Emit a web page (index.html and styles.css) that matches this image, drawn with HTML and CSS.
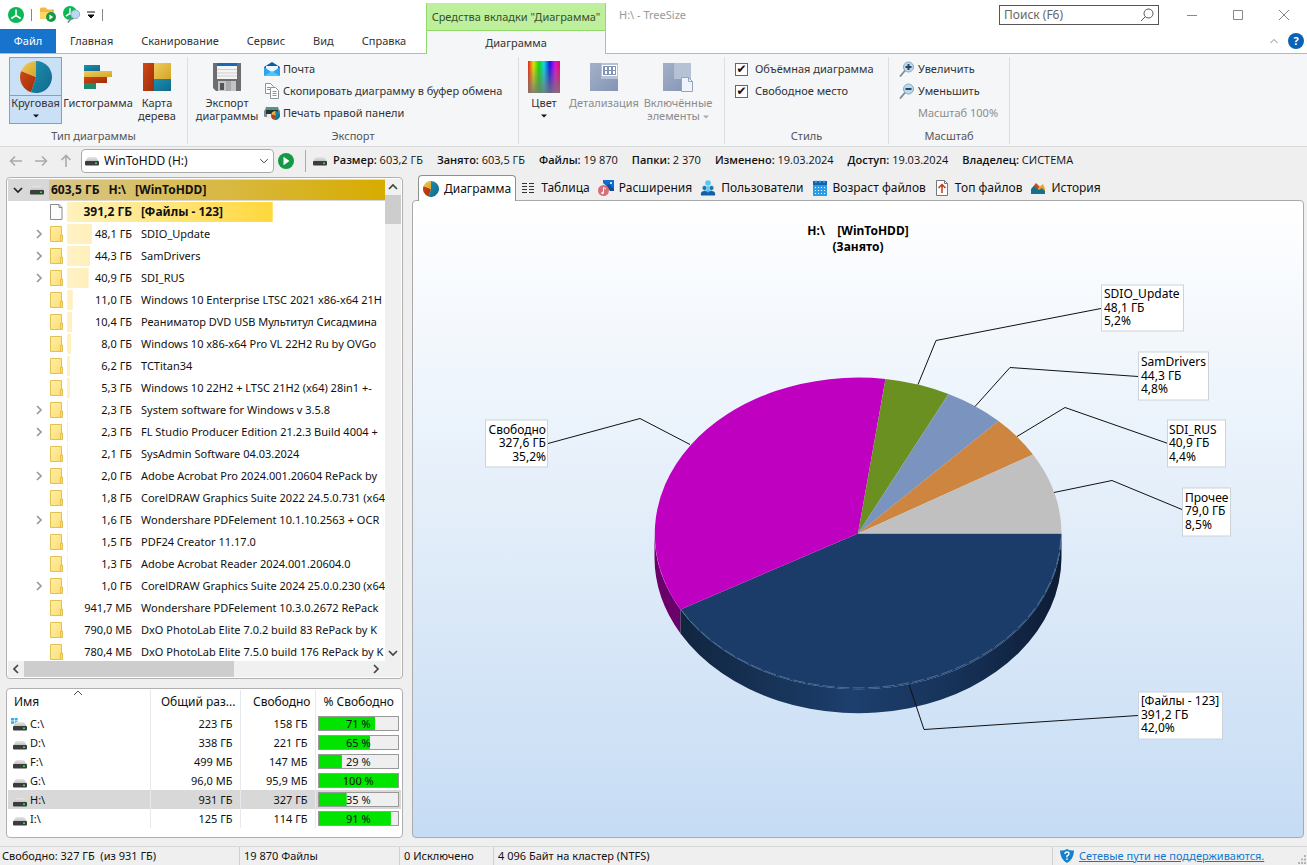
FILE: index.html
```html
<!DOCTYPE html>
<html lang="ru">
<head>
<meta charset="utf-8">
<title>H:\ - TreeSize</title>
<link rel="stylesheet" href="styles.css">
</head>
<body>
<svg class="defs" aria-hidden="true">
  <defs>
    <linearGradient id="gTeal" x1="0" y1="0" x2="1" y2="1"><stop offset="0" stop-color="#1b90b0"/><stop offset="1" stop-color="#12688c"/></linearGradient>
    <linearGradient id="gRed" x1="0" y1="0" x2="1" y2="1"><stop offset="0" stop-color="#cf4a12"/><stop offset="1" stop-color="#9e2c0c"/></linearGradient>
    <linearGradient id="gGold" x1="0" y1="0" x2="1" y2="1"><stop offset="0" stop-color="#f2cb5c"/><stop offset="1" stop-color="#d3a52a"/></linearGradient>
    <linearGradient id="gDisk" x1="0" y1="0" x2="0" y2="1"><stop offset="0" stop-color="#e8e8e8"/><stop offset="1" stop-color="#bcbcbc"/></linearGradient>
    <linearGradient id="gFolder" x1="0" y1="0" x2="1" y2="1"><stop offset="0" stop-color="#fff0a4"/><stop offset="1" stop-color="#fbdc74"/></linearGradient>
    <linearGradient id="gSteel" x1="0" y1="0" x2="1" y2="1"><stop offset="0" stop-color="#a3b0c8"/><stop offset="1" stop-color="#8494b4"/></linearGradient>
    <linearGradient id="gSpectrum"><stop offset="0" stop-color="#e8201c"/><stop offset=".17" stop-color="#e6e000"/><stop offset=".34" stop-color="#10d810"/><stop offset=".5" stop-color="#10d8e0"/><stop offset=".68" stop-color="#1818e8"/><stop offset=".85" stop-color="#e010d8"/><stop offset="1" stop-color="#e81050"/></linearGradient>
    <linearGradient id="gFade" x1="0" y1="0" x2="0" y2="1"><stop offset=".1" stop-color="#777" stop-opacity="0"/><stop offset="1" stop-color="#777" stop-opacity=".85"/></linearGradient>
    <symbol id="pie" viewBox="0 0 32 32"><path d="M16 16V0a16 16 0 1 1-5 31.200z" fill="url(#gTeal)"/><path d="M16 16L11 31.200A16 16 0 0 1 1.200 10z" fill="url(#gRed)"/><path d="M16 16L1.200 10A16 16 0 0 1 16 0z" fill="url(#gGold)"/></symbol>
    <symbol id="drive" viewBox="0 0 14 9"><path d="M3 0h8l3 4.500H0z" fill="url(#gDisk)"/><rect y="4" width="14" height="4.500" rx="1" fill="#3a3c3e"/><rect x="10" y="5.500" width="2" height="1.500" fill="#35e04c"/></symbol>
    <symbol id="folder" viewBox="0 0 13 16"><path d="M.5.5h11v8.500h1v6.500H.5z" fill="url(#gFolder)" stroke="#e4bf52"/><path d="M10.500 15.500V9.500h1.500" fill="none" stroke="#e4bf52"/></symbol>
    <symbol id="page" viewBox="0 0 13 16"><path d="M.5.5h8.500l3 3v12H.5z" fill="#fdfdfd" stroke="#8b8b8b"/><path d="M9 .5v3h3" fill="none" stroke="#8b8b8b"/></symbol>
    <symbol id="right" viewBox="0 0 16 16"><path d="M6 4l4 4-4 4" fill="none" stroke="currentColor" stroke-width="1.700"/></symbol>
    <symbol id="down" viewBox="0 0 16 16"><path d="M4 6l4 4 4-4" fill="none" stroke="currentColor" stroke-width="1.700"/></symbol>
    <symbol id="caret" viewBox="0 0 6 4"><path d="M0 .5h6L3 3.500z" fill="currentColor"/></symbol>
    <symbol id="play" viewBox="0 0 16 16"><circle cx="8" cy="8" r="8" fill="#149a44"/><path d="M5.500 3.800l6 4.200-6 4.200z" fill="#fff"/></symbol>
    <symbol id="logo" viewBox="0 0 16 16"><circle cx="8" cy="8" r="8" fill="#0cb755"/><path d="M8 2.500V8.500M8 8.500L3.300 11.500M8 8.500l4.700 3" stroke="#fff" stroke-width="1.600" fill="none"/></symbol>
    <symbol id="lens" viewBox="0 0 16 16"><path d="M1 15.500L6.500 9" stroke="#7e8a92" stroke-width="1.800"/><circle cx="9.500" cy="6" r="5" fill="#b9daf2" stroke="#8fa6b4"/></symbol>
  </defs>
</svg>

<header class="top">
  <div class="top-left">
    <div class="quick">
      <svg width="16" height="16"><use href="#logo"/></svg>
      <i class="bar"></i>
      <button aria-label="Открыть папку"><svg width="18" height="17" viewBox="0 0 18 17"><path d="M1 3q0-1.500 1.500-1.500h4l2 2h6.500v9.500H1z" fill="#f3b93c"/><path d="M1 6h14v7H1z" fill="#ffd765"/><use href="#play" x="7" y="6" width="10" height="10"/></svg></button>
      <button aria-label="Поиск файлов"><svg width="18" height="17" viewBox="0 0 18 17"><use href="#logo" x="0" y="0" width="14" height="14"/><use href="#lens" x="4" y="3" width="14" height="14"/></svg></button>
      <button aria-label="Настройка панели"><svg width="8" height="8" viewBox="0 0 8 8"><path d="M0 1h8M1 4h6L4 7z" fill="#111" stroke="#111"/></svg></button>
      <i class="bar"></i>
    </div>
    <nav class="tabs">
      <button class="file">Файл</button>
      <button>Главная</button>
      <button>Сканирование</button>
      <button>Сервис</button>
      <button>Вид</button>
      <button>Справка</button>
    </nav>
  </div>
  <div class="context">
    <div class="context-title">Средства вкладки "Диаграмма"</div>
    <button class="context-tab">Диаграмма</button>
  </div>
  <div class="top-right">
    <div class="title">H:\ - TreeSize</div>
    <div class="window-tools">
      <div class="window-row">
        <label class="search"><input type="text" placeholder="Поиск (F6)" aria-label="Поиск"><svg width="14" height="14" viewBox="0 0 14 14" fill="none" stroke="#555"><circle cx="8.500" cy="5.500" r="4.500"/><path d="M5.300 8.700L1 13"/></svg></label>
        <button aria-label="Свернуть"><svg width="12" height="12" viewBox="0 0 12 12"><path d="M1 6.500h10" stroke="#888"/></svg></button>
        <button aria-label="Развернуть"><svg width="12" height="12" viewBox="0 0 12 12"><path d="M1.500 1.500h9v9h-9z" fill="none" stroke="#888"/></svg></button>
        <button aria-label="Закрыть"><svg width="12" height="12" viewBox="0 0 12 12"><path d="M1 1l10 10M11 1L1 11" stroke="#888"/></svg></button>
      </div>
      <div class="help-row">
        <button aria-label="Свернуть ленту"><svg width="10" height="8" viewBox="0 0 10 8"><path d="M1.500 6L5 2.500 8.500 6" fill="none" stroke="#888"/></svg></button>
        <button class="help" aria-label="Помощь">?</button>
      </div>
    </div>
  </div>
</header>

<section class="ribbon">
  <div class="group g-type">
    <div class="tools">
      <button class="big active w-pie"><span class="pic"><svg width="32" height="32"><use href="#pie"/></svg></span><span>Круговая</span><svg class="caret" width="6" height="4"><use href="#caret"/></svg></button>
      <button class="big w-hist"><span class="pic"><svg width="28" height="28" viewBox="0 0 28 28"><rect y="2" width="16" height="6" fill="url(#gTeal)"/><rect y="8" width="28" height="6" fill="url(#gGold)"/><rect y="14" width="23" height="6" fill="url(#gRed)"/><rect y="20" width="12" height="6" fill="#208a68"/></svg></span><span>Гистограмма</span></button>
      <button class="big w-map"><span class="pic"><svg width="28" height="28" viewBox="0 0 28 28"><rect width="11" height="28" fill="url(#gRed)"/><rect x="11" width="17" height="16" fill="url(#gGold)"/><rect x="11" y="16" width="17" height="12" fill="url(#gTeal)"/></svg></span><span>Карта<br>дерева</span></button>
    </div>
    <div class="caption">Тип диаграммы</div>
  </div>
  <div class="group g-export">
    <div class="tools">
      <button class="big w-save"><span class="pic"><svg width="28" height="28" viewBox="0 0 28 28"><path d="M0 0h28v28H3l-3-3z" fill="#6c6e72"/><rect x="4" width="20" height="16" fill="#f4f4f4"/><rect x="4" width="20" height="3" fill="#1668b8"/><path d="M4 6.500h20M4 10h20M4 13h20" stroke="#cfcfcf"/><rect x="5" y="18" width="18" height="10" fill="#c4c4c4"/><rect x="7" y="20" width="4" height="7" fill="#555"/><rect x="13" y="18" width="5" height="10" fill="#aaa"/></svg></span><span>Экспорт<br>диаграммы</span></button>
      <div class="stack">
        <button class="line"><svg width="16" height="16" viewBox="0 0 16 16"><path d="M0 6l8-5 8 5v9H0z" fill="#0a5da4"/><path d="M2 5h12v7H2z" fill="#e9f6ff"/><path d="M0 6l8 5.500L16 6v9H0z" fill="#2aa4ee"/><path d="M0 15l8-5 8 5z" fill="#51c4fa"/></svg>Почта</button>
        <button class="line"><svg width="16" height="16" viewBox="0 0 16 16" fill="#fff" stroke="#8d959c"><path d="M1.500.5h5l3 3v7h-8z"/><path d="M3 4.500h3M3 6.500h4"/><path d="M6.500 4.500h5l3 3v8h-8z"/><path d="M8.500 8.500h4M8.500 10.500h4M8.500 12.500h4"/></svg>Скопировать диаграмму в буфер обмена</button>
        <button class="line"><svg width="16" height="16" viewBox="0 0 16 16"><path d="M2 2h12l1 3H1z" fill="#479a83"/><rect y="5" width="16" height="7" rx="1" fill="#7e898e"/><rect x="2" y="5" width="12" height="4" fill="#293238"/><rect x="3" y="9" width="8" height="5" fill="#eee"/><use href="#pie" x="7" y="6" width="9" height="9"/></svg>Печать правой панели</button>
      </div>
    </div>
    <div class="caption">Экспорт</div>
  </div>
  <div class="group g-color">
    <div class="tools">
      <button class="big w-color"><span class="pic"><svg width="32" height="32" viewBox="0 0 32 32"><rect width="32" height="32" fill="url(#gSpectrum)"/><rect width="32" height="32" fill="url(#gFade)"/></svg></span><span>Цвет</span><svg class="caret" width="6" height="4"><use href="#caret"/></svg></button>
      <button class="big w-detail" disabled><span class="pic"><svg width="28" height="28" viewBox="0 0 28 28"><rect width="28" height="28" fill="url(#gSteel)"/><rect x="11" width="17" height="16" fill="#b5c2d6"/><rect x="12.500" y="2.500" width="14" height="10" fill="#8294b4" stroke="#fff"/><path d="M15 4h2v3h-2zm4 0h2v3h-2zm4 0h2v3h-2zm-8 4h2v3h-2zm4 0h2v3h-2zm4 0h2v3h-2z" fill="#fff"/></svg></span><span>Детализация</span></button>
      <button class="big w-incl" disabled><span class="pic"><svg width="30" height="30" viewBox="0 0 30 30"><rect y="1" width="28" height="28" fill="url(#gSteel)"/><rect x="11" y="1" width="17" height="16" fill="#b5c2d6"/><path d="M18.500 15.500h7l4 4v10h-11z" fill="#eff4fc" stroke="#90a4c4"/><path d="M25.500 15.500v4h4" fill="none" stroke="#90a4c4"/></svg></span><span>Включённые<br>элементы <svg class="inline-caret" width="6" height="4"><use href="#caret"/></svg></span></button>
    </div>
  </div>
  <div class="group g-style">
    <div class="stack tools">
      <label class="check"><input type="checkbox" checked>Объёмная диаграмма</label>
      <label class="check"><input type="checkbox" checked>Свободное место</label>
    </div>
    <div class="caption">Стиль</div>
  </div>
  <div class="group g-zoom">
    <div class="stack tools">
      <button class="line"><svg width="16" height="16" viewBox="0 0 16 16"><use href="#lens"/><path d="M9.500 3v6M6.500 6h6" stroke="#26465c" stroke-width="2"/></svg>Увеличить</button>
      <button class="line"><svg width="16" height="16" viewBox="0 0 16 16"><use href="#lens"/><path d="M6.500 6h6" stroke="#26465c" stroke-width="2"/></svg>Уменьшить</button>
      <button class="line zoom-value" disabled>Масштаб 100%</button>
    </div>
    <div class="caption">Масштаб</div>
  </div>
</section>

<section class="address">
  <div class="nav">
    <button aria-label="Назад"><svg width="14" height="14" viewBox="0 0 14 14"><path d="M13 7H1.500M6 2.500L1.500 7 6 11.500"/></svg></button>
    <button aria-label="Вперёд"><svg width="14" height="14" viewBox="0 0 14 14"><path d="M1 7h11.500M8 2.500L12.500 7 8 11.500"/></svg></button>
    <button aria-label="Вверх"><svg width="14" height="14" viewBox="0 0 14 14"><path d="M7 13V1.500M2.500 6L7 1.500 11.500 6"/></svg></button>
  </div>
  <div class="combo"><svg width="14" height="9"><use href="#drive"/></svg><select aria-label="Диск"><option>WinToHDD (H:)</option></select><svg width="12" height="12" viewBox="0 0 16 16"><path d="M3 5.500l5 5 5-5" fill="none" stroke="#444" stroke-width="1.300"/></svg></div>
  <button class="go" aria-label="Сканировать"><svg width="16" height="16"><use href="#play"/></svg></button>
  <div class="facts">
    <svg width="14" height="9"><use href="#drive"/></svg>
    <span><b>Размер:</b> 603,2 ГБ</span><span><b>Занято:</b> 603,5 ГБ</span><span><b>Файлы:</b> 19 870</span><span><b>Папки:</b> 2 370</span><span><b>Изменено:</b> 19.03.2024</span><span><b>Доступ:</b> 19.03.2024</span><span><b>Владелец:</b> СИСТЕМА</span>
  </div>
</section>

<main class="work">
  <aside class="side">
    <section class="tree">
      <div class="tree-top">
        <ul class="rows">
          <li class="root"><button aria-label="Свернуть"><svg width="16" height="16"><use href="#down"/></svg></button><svg width="14" height="9"><use href="#drive"/></svg><div class="data"><span>603,5 ГБ</span><span>H:\</span><span>[WinToHDD]</span></div></li>
          <li class="files"><i></i><svg width="13" height="16"><use href="#page"/></svg><div class="data" style="--share:64.7%"><span class="size">391,2 ГБ</span><span>[Файлы - 123]</span></div></li>
          <li><button aria-label="Раскрыть"><svg width="16" height="16"><use href="#right"/></svg></button><svg width="13" height="16"><use href="#folder"/></svg><div class="data" style="--share:8%"><span class="size">48,1 ГБ</span><span>SDIO_Update</span></div></li>
          <li><button aria-label="Раскрыть"><svg width="16" height="16"><use href="#right"/></svg></button><svg width="13" height="16"><use href="#folder"/></svg><div class="data" style="--share:7.3%"><span class="size">44,3 ГБ</span><span>SamDrivers</span></div></li>
          <li><button aria-label="Раскрыть"><svg width="16" height="16"><use href="#right"/></svg></button><svg width="13" height="16"><use href="#folder"/></svg><div class="data" style="--share:6.8%"><span class="size">40,9 ГБ</span><span>SDI_RUS</span></div></li>
          <li><i></i><svg width="13" height="16"><use href="#folder"/></svg><div class="data" style="--share:1.8%"><span class="size">11,0 ГБ</span><span>Windows 10 Enterprise LTSC 2021 x86-x64 21H</span></div></li>
          <li><i></i><svg width="13" height="16"><use href="#folder"/></svg><div class="data" style="--share:1.7%"><span class="size">10,4 ГБ</span><span>Реаниматор DVD USB Мультитул Сисадмина</span></div></li>
          <li><i></i><svg width="13" height="16"><use href="#folder"/></svg><div class="data" style="--share:1.3%"><span class="size">8,0 ГБ</span><span>Windows 10 x86-x64 Pro VL 22H2 Ru by OVGo</span></div></li>
          <li><i></i><svg width="13" height="16"><use href="#folder"/></svg><div class="data" style="--share:1%"><span class="size">6,2 ГБ</span><span>TCTitan34</span></div></li>
          <li><i></i><svg width="13" height="16"><use href="#folder"/></svg><div class="data" style="--share:0.9%"><span class="size">5,3 ГБ</span><span>Windows 10 22H2 + LTSC 21H2 (x64) 28in1 +-</span></div></li>
          <li><button aria-label="Раскрыть"><svg width="16" height="16"><use href="#right"/></svg></button><svg width="13" height="16"><use href="#folder"/></svg><div class="data" style="--share:0.4%"><span class="size">2,3 ГБ</span><span>System software for Windows v 3.5.8</span></div></li>
          <li><button aria-label="Раскрыть"><svg width="16" height="16"><use href="#right"/></svg></button><svg width="13" height="16"><use href="#folder"/></svg><div class="data" style="--share:0.4%"><span class="size">2,3 ГБ</span><span>FL Studio Producer Edition 21.2.3 Build 4004 +</span></div></li>
          <li><i></i><svg width="13" height="16"><use href="#folder"/></svg><div class="data" style="--share:0.3%"><span class="size">2,1 ГБ</span><span>SysAdmin Software 04.03.2024</span></div></li>
          <li><button aria-label="Раскрыть"><svg width="16" height="16"><use href="#right"/></svg></button><svg width="13" height="16"><use href="#folder"/></svg><div class="data" style="--share:0.3%"><span class="size">2,0 ГБ</span><span>Adobe Acrobat Pro 2024.001.20604 RePack by</span></div></li>
          <li><i></i><svg width="13" height="16"><use href="#folder"/></svg><div class="data" style="--share:0.3%"><span class="size">1,8 ГБ</span><span>CorelDRAW Graphics Suite 2022 24.5.0.731 (x64</span></div></li>
          <li><button aria-label="Раскрыть"><svg width="16" height="16"><use href="#right"/></svg></button><svg width="13" height="16"><use href="#folder"/></svg><div class="data" style="--share:0.3%"><span class="size">1,6 ГБ</span><span>Wondershare PDFelement 10.1.10.2563 + OCR</span></div></li>
          <li><i></i><svg width="13" height="16"><use href="#folder"/></svg><div class="data" style="--share:0.3%"><span class="size">1,5 ГБ</span><span>PDF24 Creator 11.17.0</span></div></li>
          <li><i></i><svg width="13" height="16"><use href="#folder"/></svg><div class="data" style="--share:0.2%"><span class="size">1,3 ГБ</span><span>Adobe Acrobat Reader 2024.001.20604.0</span></div></li>
          <li><button aria-label="Раскрыть"><svg width="16" height="16"><use href="#right"/></svg></button><svg width="13" height="16"><use href="#folder"/></svg><div class="data" style="--share:0.2%"><span class="size">1,0 ГБ</span><span>CorelDRAW Graphics Suite 2024 25.0.0.230 (x64</span></div></li>
          <li><i></i><svg width="13" height="16"><use href="#folder"/></svg><div class="data" style="--share:0%"><span class="size">941,7 МБ</span><span>Wondershare PDFelement 10.3.0.2672 RePack</span></div></li>
          <li><i></i><svg width="13" height="16"><use href="#folder"/></svg><div class="data" style="--share:0%"><span class="size">790,0 МБ</span><span>DxO PhotoLab Elite 7.0.2 build 83 RePack by K</span></div></li>
          <li><i></i><svg width="13" height="16"><use href="#folder"/></svg><div class="data" style="--share:0%"><span class="size">780,4 МБ</span><span>DxO PhotoLab Elite 7.5.0 build 176 RePack by K</span></div></li>
        </ul>
        <div class="vscroll"><svg class="flip" width="16" height="16"><use href="#down"/></svg><i></i><svg width="16" height="16"><use href="#down"/></svg></div>
      </div>
      <div class="hscroll"><svg class="flip" width="16" height="16"><use href="#right"/></svg><div><i></i></div><svg width="16" height="16"><use href="#right"/></svg></div>
    </section>

    <section class="drives">
      <table>
        <colgroup><col><col class="c-total"><col class="c-free"><col class="c-pct"></colgroup>
        <thead><tr><th class="sorted">Имя<svg width="10" height="6" viewBox="0 0 10 6"><path d="M1 5l4-4 4 4" fill="none" stroke="#555"/></svg></th><th>Общий раз...</th><th>Свободно</th><th>% Свободно</th></tr></thead>
        <tbody>
          <tr><td class="win"><svg width="16" height="13" viewBox="0 0 16 13"><path d="M0 0h3v2.500H0zm3.700 0h3v2.500h-3zM0 3.300h3v2.500H0zm3.700 0h3v2.500h-3z" fill="#25b6e2"/><use href="#drive" x="2" y="4" width="14" height="9"/></svg>C:\</td><td>223 ГБ</td><td>158 ГБ</td><td><div class="meter" style="--free:71%">71 %</div></td></tr>
          <tr><td><svg width="14" height="9"><use href="#drive"/></svg>D:\</td><td>338 ГБ</td><td>221 ГБ</td><td><div class="meter" style="--free:65%">65 %</div></td></tr>
          <tr><td><svg width="14" height="9"><use href="#drive"/></svg>F:\</td><td>499 МБ</td><td>147 МБ</td><td><div class="meter" style="--free:29%">29 %</div></td></tr>
          <tr><td><svg width="14" height="9"><use href="#drive"/></svg>G:\</td><td>96,0 МБ</td><td>95,9 МБ</td><td><div class="meter" style="--free:100%">100 %</div></td></tr>
          <tr class="selected"><td><svg width="14" height="9"><use href="#drive"/></svg>H:\</td><td>931 ГБ</td><td>327 ГБ</td><td><div class="meter" style="--free:35%">35 %</div></td></tr>
          <tr><td><svg width="14" height="9"><use href="#drive"/></svg>I:\</td><td>125 ГБ</td><td>114 ГБ</td><td><div class="meter" style="--free:91%">91 %</div></td></tr>
        </tbody>
      </table>
    </section>
  </aside>

  <section class="view">
    <nav class="view-tabs">
      <button class="current"><svg width="16" height="16"><use href="#pie"/></svg>Диаграмма</button>
      <button><svg width="16" height="16" viewBox="0 0 16 16"><path d="M2 3.500h5M9 3.500h5M2 6.500h5M9 6.500h5M2 9.500h5M9 9.500h5M2 12.500h5M9 12.500h5" stroke="#333"/></svg>Таблица</button>
      <button><svg width="16" height="16" viewBox="0 0 16 16"><path d="M5 0h11v11h-2L5 3z" fill="#0f6fd0"/><path d="M8 6l3-2 5 5v2h-4z" fill="#0a4f9c"/><circle cx="13" cy="3" r="1" fill="#fff"/><circle cx="5.500" cy="10.500" r="5.500" fill="#d86f78"/><path d="M5.500 13V7.500l2.500 1.500" fill="none" stroke="#fff"/><circle cx="4.500" cy="13" r="1.200" fill="#fff"/></svg>Расширения</button>
      <button><svg width="16" height="16" viewBox="0 0 16 16"><circle cx="8" cy="3" r="2.800" fill="#56c6f4"/><path d="M4 9q4-6 8 0v3H4z" fill="#56c6f4"/><circle cx="4.500" cy="8" r="2.400" fill="#1572b8" stroke="#efefef" stroke-width=".6"/><circle cx="11.500" cy="8" r="2.400" fill="#1572b8" stroke="#efefef" stroke-width=".6"/><path d="M1 15.500q-1-4.500 3.500-4.500 3 0 3.500 1.500 .5-1.500 3.500-1.500 4.500 0 3.500 4.500z" fill="#1261a8"/></svg>Пользователи</button>
      <button><svg width="16" height="16" viewBox="0 0 16 16"><rect x="1" y="1" width="14" height="15" fill="#2d9de6"/><rect x="1" y="1" width="14" height="4" fill="#1460ac"/><path d="M4 0v3M8 0v3M12 0v3" stroke="#6fc6f4"/><path d="M3 7.500h10M3 10.500h10M3 13.500h10" stroke="#fff" stroke-dasharray="1 2"/></svg>Возраст файлов</button>
      <button><svg width="16" height="16" viewBox="0 0 16 16"><path d="M2.500.5h8l3 3v12h-11z" fill="#fff" stroke="#777"/><path d="M10.500.5v3h3" fill="none" stroke="#777"/><path d="M8 13V5M4.500 8L8 4.500 11.500 8" fill="none" stroke="#c0391b" stroke-width="1.500"/></svg>Топ файлов</button>
      <button><svg width="16" height="16" viewBox="0 0 16 16"><path d="M2 8l4-5 5 5v5H2z" fill="#cf4a1e"/><path d="M8 8l5-4 2 5v4H8z" fill="#e5a52c"/><path d="M1 14V9l3-3 5 4 3-2 3 3v3z" fill="#17718e"/></svg>История</button>
    </nav>
    <div class="chart">
      <svg class="plot" viewBox="413 202 890 634" role="img" aria-label="Круговая диаграмма занятого места">
        <defs>
          <linearGradient id="rimBlue" gradientUnits="userSpaceOnUse" x1="680" x2="1062" y1="0" y2="0"><stop offset="0" stop-color="#11253f"/><stop offset=".45" stop-color="#1c3f6d"/><stop offset=".7" stop-color="#17335a"/><stop offset="1" stop-color="#0d1c34"/></linearGradient>
        </defs>
        <path d="M654.500 533A203.500 156 0 0 0 680.500 609V633A203.500 156 0 0 1 654.500 557z" fill="#6b006b"/>
        <path d="M680.500 609A203.500 156 0 0 0 1061.500 533V557A203.500 156 0 0 1 680.500 633z" fill="url(#rimBlue)"/>
        <path d="M858 533H1061.500A203.500 156 0 0 1 680.500 609z" fill="#1b3c69"/>
        <path d="M858 533L680.500 609A203.500 156 0 0 1 885.500 378.500z" fill="#c000c0"/>
        <path d="M858 533L885.500 378.500A203.500 156 0 0 1 948.500 393.500z" fill="#6b9022"/>
        <path d="M858 533L948.500 393.500A203.500 156 0 0 1 998.500 420.500z" fill="#7a94bf"/>
        <path d="M858 533L998.500 420.500A203.500 156 0 0 1 1033 454z" fill="#cd853f"/>
        <path d="M858 533L1033 454A203.500 156 0 0 1 1061.500 533z" fill="#c0c0c0"/>
        <path d="M681 609A203.500 156 0 0 0 1061 534" fill="none" stroke="#7f9ac0" stroke-width=".5" stroke-dasharray="12 3"/>
        <g fill="none" stroke="#111">
          <path d="M548 443l92-25 50 26M918 384l18-44 165-32M975 406l35-39 128 9M1017 436l48-29 103 36M1054 492l58-12 70 29M909 684l15 45 214-14"/>
        </g>
        <g fill="#fff" stroke="#ccd3da">
          <rect x="485.500" y="419.500" width="62" height="47"/><rect x="1101.500" y="284.500" width="82" height="46"/><rect x="1138.500" y="351.500" width="70" height="48"/><rect x="1167.500" y="419.500" width="58" height="47"/><rect x="1182.500" y="487.500" width="48" height="48"/><rect x="1138.500" y="691.500" width="84" height="47"/>
        </g>
        <g class="notes">
          <g text-anchor="end"><text x="546" y="433">Свободно</text><text x="546" y="446">327,6 ГБ</text><text x="546" y="460">35,2%</text></g>
          <text x="1104" y="297">SDIO_Update</text><text x="1104" y="311">48,1 ГБ</text><text x="1104" y="324">5,2%</text>
          <text x="1141" y="365">SamDrivers</text><text x="1141" y="379">44,3 ГБ</text><text x="1141" y="392">4,8%</text>
          <text x="1169" y="433">SDI_RUS</text><text x="1169" y="446">40,9 ГБ</text><text x="1169" y="460">4,4%</text>
          <text x="1185" y="501">Прочее</text><text x="1185" y="514">79,0 ГБ</text><text x="1185" y="528">8,5%</text>
          <text x="1141" y="704">[Файлы - 123]</text><text x="1141" y="718">391,2 ГБ</text><text x="1141" y="731">42,0%</text>
        </g>
        <g class="heading" text-anchor="middle"><text x="858" y="234">H:\&#160;&#160;&#160; [WinToHDD]</text><text x="858" y="250">(Занято)</text></g>
      </svg>
    </div>
  </section>
</main>

<footer class="status">
  <span class="s-free">Свободно: 327 ГБ&#160; (из 931 ГБ)</span>
  <span class="s-files">19 870 Файлы</span>
  <span class="s-skip">0 Исключено</span>
  <span class="s-cluster">4 096 Байт на кластер (NTFS)</span>
  <span class="s-link"><svg width="14" height="14" viewBox="0 0 14 14"><path d="M7 0q3 2 7 1.500Q14 10 7 14 0 10 0 1.500 4 2 7 0z" fill="#1380cc"/><path d="M5 5q0-2 2-2t2 1.700Q9 6 7 7v1.500M7 9.500V11" fill="none" stroke="#fff" stroke-width="1.400"/></svg><a href="#">Сетевые пути не поддерживаются.</a></span>
  <svg class="grip" width="10" height="10" viewBox="0 0 10 10"><path d="M7 0h2v2H7zM4 3.500h2v2H4zm3 0h2v2H7zM1 7h2v2H1zm3 0h2v2H4zm3 0h2v2H7z" fill="#b4b4b4"/></svg>
</footer>
</body>
</html>
```
FILE: styles.css
```css
* { box-sizing: border-box; }
html, body { height: 100%; }
body {
  margin: 0;
  display: flex;
  flex-direction: column;
  background: #efefef;
  color: #111;
  font: 11px/16px "Noto Sans", "Open Sans", sans-serif;
  overflow: hidden;
}
button, input, select {
  font: inherit;
  color: inherit;
  background: none;
  border: 0;
  padding: 0;
  margin: 0;
}
svg { display: block; flex: none; }
.defs { position: absolute; width: 0; height: 0; }

/* title bar and ribbon tabs */
.top { display: flex; background: #fff; flex: none; }
.top-left { width: 426px; border-bottom: 1px solid #92da68; }
.quick { height: 29px; display: flex; align-items: center; gap: 6px; padding-left: 8px; }
.quick .bar { width: 1px; height: 12px; background: #888; margin: 0 1px; }
.tabs { display: flex; height: 24px; }
.tabs button { padding: 0 14px; color: #333; }
.tabs .file { width: 56px; padding: 0; background: #1873cc; color: #fff; }
.context {
  width: 180px;
  margin-top: 3px;
  display: flex;
  flex-direction: column;
  border: solid #92da68;
  border-width: 0 1px;
  background: #f4f6f8;
}
.context-title {
  height: 28px;
  line-height: 28px;
  text-align: center;
  white-space: nowrap;
  color: #36502a;
  background: #beef9c;
  border-bottom: 1px solid #92da68;
}
.context-tab { height: 23px; color: #333; }
.top-right { flex: 1; display: flex; justify-content: space-between; padding-left: 13px; border-bottom: 1px solid #92da68; }
.title { color: #999; line-height: 30px; }
.window-row { height: 29px; display: flex; align-items: center; gap: 34px; padding-right: 17px; }
.search { display: flex; align-items: center; width: 160px; height: 20px; border: 1px solid #555; padding: 0 4px; margin-right: -7px; }
.search input { flex: 1; min-width: 0; outline: 0; font-size: 12px; }
.search input::placeholder { color: #666; opacity: 1; }
.help-row { display: flex; justify-content: flex-end; align-items: center; gap: 9px; padding-right: 3px; height: 24px; }
.help { width: 16px; height: 16px; border-radius: 50%; background: #0a62b4; color: #fff; font-weight: bold; line-height: 16px; }

/* ribbon */
.ribbon { display: flex; flex: none; height: 93px; padding-top: 3px; background: #f4f6f8; border-bottom: 1px solid #d6d8da; color: #333; }
.group { display: flex; flex-direction: column; border-right: 1px solid #dcdfe2; margin-bottom: 2px; }
.tools { display: flex; height: 71px; }
.caption { text-align: center; color: #555; }
.g-type { width: 188px; }
.g-export { width: 331px; }
.g-color { width: 206px; }
.g-style { width: 164px; }
.g-zoom { width: 121px; }
.g-type .tools, .g-export .tools { padding-left: 9px; }
.big { display: flex; flex-direction: column; align-items: center; height: 67px; line-height: 13px; color: #333; white-space: nowrap; }
.big .pic { height: 39px; display: flex; align-items: center; }
.big .caret { margin-top: 5px; color: #111; }
.big.active { border: 1px solid #6ea6dc; background: linear-gradient(#c9e0f7 37px, #6ea6dc 37px, #6ea6dc 38px, #c9e0f7 38px); }
.big.active .pic { height: 38px; }
.big:disabled { color: #8c8c8c; }
.w-pie { width: 53px; }
.w-hist { width: 72px; }
.w-map { width: 46px; }
.w-save { width: 60px; }
.w-color { width: 50px; }
.w-detail { width: 70px; }
.w-incl { width: 78px; }
.inline-caret { display: inline-block; vertical-align: middle; color: #aaa; }
.stack { display: flex; flex-direction: column; padding-top: 1px; }
.line { display: flex; align-items: center; gap: 3px; height: 22px; white-space: nowrap; }
.g-export .stack { padding-left: 7px; }
.g-style .stack { padding-left: 10px; }
.g-zoom .stack { padding-left: 10px; }
.zoom-value { padding-left: 19px; color: #8c8c8c; }
.check { display: flex; align-items: center; gap: 7px; height: 22px; }
.check input {
  appearance: none;
  width: 13px;
  height: 13px;
  border: 1px solid #56688a;
  background: #fff;
  display: grid;
  place-items: center;
}
.check input:checked::before { content: "✔"; font: 12px/11px "DejaVu Sans", sans-serif; color: #111; }

/* address bar */
.address { display: flex; align-items: center; height: 28px; flex: none; padding-left: 9px; }
.nav { display: flex; gap: 11px; width: 72px; }
.nav svg { fill: none; stroke: #aaa; stroke-width: 1.600px; }
.combo { width: 193px; height: 24px; display: flex; align-items: center; gap: 5px; padding: 0 3px; background: #fff; border: 1px solid #aaa; border-radius: 4px; }
.combo select { flex: 1; appearance: none; outline: 0; font-size: 12px; }
.go { margin: 0 11px 0 4px; }
.facts { display: flex; align-items: center; gap: 14px; height: 22px; padding-left: 7px; border-left: 1px solid #aaa; white-space: nowrap; font-family: "Open Sans", "Noto Sans", sans-serif; }
.facts svg { margin-right: -8px; }
.facts span { padding-bottom: 2px; }
.facts b { font-weight: 600; }

/* work area */
.work { flex: 1; min-height: 0; display: flex; gap: 9px; padding: 0 3px 8px 6px; }
.side { width: 397px; flex: none; display: flex; flex-direction: column; gap: 9px; padding-top: 2px; }
.tree, .drives { background: #fff; border: 1px solid #b0b0b0; border-radius: 4px; padding: 1px; }
.tree { flex: 1; min-height: 0; display: flex; flex-direction: column; }
.tree-top { flex: 1; min-height: 0; display: flex; }
.rows { list-style: none; margin: 0; padding: 0; flex: 1; min-width: 0; overflow: hidden; }
.rows li { display: flex; align-items: center; height: 22px; padding-left: 23px; gap: 3px; white-space: nowrap; }
.rows li > i, .rows li > button { width: 16px; flex: none; color: #999; }
.rows .data {
  flex: 1;
  min-width: 0;
  display: flex;
  gap: 9px;
  margin-left: 1px;
  overflow: hidden;
  line-height: 20px;
  background: linear-gradient(90deg, #fff2c6, #ffefba) no-repeat 0 0 / var(--share) 100%;
}
.size { width: 65px; flex: none; text-align: right; }
.rows .files { font-weight: bold; font-size: 12px; }
.rows .files .data { background-image: linear-gradient(90deg, #fff2bc, #ffd83c); }
.rows .root { padding-left: 2px; gap: 4px; background: #d8d8d8; font-weight: bold; font-size: 12px; }
.rows .root > button { color: #222; }
.rows .root .data { padding-left: 2px; background: linear-gradient(90deg, #d9c68a, #d7ac00); }
.vscroll { width: 16px; background: #f0f0f0; display: flex; flex-direction: column; }
.vscroll i { height: 29px; background: #cdcdcd; margin-bottom: auto; }
.vscroll svg, .hscroll svg { color: #444; }
.vscroll .flip, .hscroll .flip { transform: rotate(180deg); }
.hscroll { display: flex; height: 16px; padding-right: 17px; background: #f0f0f0; }
.hscroll div { flex: 1; display: flex; }
.hscroll i { width: 61%; background: #cdcdcd; }

/* drives */
.drives { height: 150px; flex: none; }
.drives table { width: 100%; table-layout: fixed; border-collapse: collapse; background: #fff; }
.c-total { width: 90px; }
.c-free { width: 75px; }
.c-pct { width: 86px; }
.drives th, .drives td { padding: 0 7px 0 0; text-align: right; font-weight: normal; border-right: 1px solid #e6e9ee; white-space: nowrap; }
.drives th { height: 24px; padding-right: 4px; font-size: 12px; }
.drives td { height: 19px; line-height: 18px; }
.drives th:first-child { text-align: left; padding-left: 6px; }
.sorted { position: relative; }
.sorted svg { position: absolute; left: 46%; top: 0; }
.drives td:first-child { text-align: left; padding-left: 5px; }
.drives td svg { display: inline-block; vertical-align: -3px; margin-right: 3px; }
.drives td.win { padding-left: 3px; }
.drives th:last-child, .drives td:last-child { border-right: 0; }
.drives th:last-child { padding-right: 7px; }
.drives td:last-child { padding: 0 2px; }
.selected { background: #d8d8d8; }
.meter { height: 15px; border: 1px solid #999; text-align: center; line-height: 13px; background: #efefef linear-gradient(#00e400, #00e400) no-repeat 0 0 / var(--free) 100%; }

/* right pane */
.view { flex: 1; min-width: 0; display: flex; flex-direction: column; }
.view-tabs { display: flex; height: 26px; padding-left: 6px; margin-bottom: -1px; font-size: 12px; }
.view-tabs button { display: flex; align-items: center; gap: 5px; padding: 0 4px; white-space: nowrap; }
.view-tabs .current { position: relative; background: #fff; border: 1px solid #909090; border-bottom: 0; border-radius: 4px 4px 0 0; }
.chart { flex: 1; min-height: 0; border: 1px solid #aaa; border-radius: 4px; padding: 1px 0 0; background: linear-gradient(#fff, #c6dcf4); }
.plot { width: 100%; height: 100%; }
.notes { font-size: 12px; }
.heading { font-size: 12px; font-weight: bold; }

/* status bar */
.status { display: flex; flex: none; height: 19px; border-top: 1px solid #d8d8d8; line-height: 18px; white-space: nowrap; }
.status span { padding-left: 4px; border-left: 1px solid #d0d0d0; }
.status .s-free { width: 239px; padding-left: 2px; border-left: 0; }
.s-files { width: 160px; }
.s-skip { width: 94px; }
.s-cluster { flex: 1; }
.status .s-link { display: flex; align-items: center; gap: 5px; padding-left: 7px; width: 243px; }
.s-link a { color: #1278cc; }
.grip { align-self: flex-end; margin-left: 2px; }
```
